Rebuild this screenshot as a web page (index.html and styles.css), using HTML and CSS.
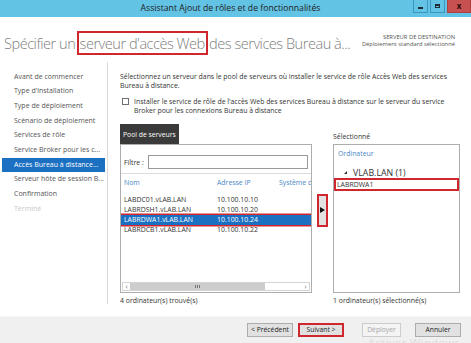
FILE: index.html
```html
<!DOCTYPE html>
<html lang="fr">
<head>
  <meta charset="UTF-8" />
  <title>Assistant Ajout de rôles et de fonctionnalités</title>
  <link rel="stylesheet" href="styles.css">
</head>
<body>
  <div class="window">
    <div class="titlebar">
      <span class="title">Assistant Ajout de rôles et de fonctionnalités</span>
      <div class="winbtns">
        <span class="wbtn min"><i></i></span>
        <span class="wbtn max"><i></i></span>
        <span class="wbtn close">x</span>
      </div>
    </div>

    <div class="header">
      <h1>Spécifier un <span class="mark">serveur d'accès Web</span> des services Bureau à...</h1>
      <div class="dest">
        <div>SERVEUR DE DESTINATION</div>
        <div>Déploiement standard sélectionné</div>
      </div>
    </div>

    <div class="main">
      <ul class="nav">
        <li>Avant de commencer</li>
        <li>Type d'installation</li>
        <li>Type de déploiement</li>
        <li>Scénario de déploiement</li>
        <li>Services de rôle</li>
        <li>Service Broker pour les c...</li>
        <li class="active">Accès Bureau à distance...</li>
        <li>Serveur hôte de session B...</li>
        <li>Confirmation</li>
        <li class="off">Terminé</li>
      </ul>

      <div class="content">
        <p class="intro">Sélectionnez un serveur dans le pool de serveurs où installer le service de rôle Accès Web des services<br>Bureau à distance.</p>
        <div class="check">
          <span class="box"></span>
          <span>Installer le service de rôle de l'accès Web des services Bureau à distance sur le serveur du service<br>Broker pour les connexions Bureau à distance</span>
        </div>

        <div class="pickers">
          <div class="pool">
            <div class="tab">Pool de serveurs</div>
            <div class="panel">
              <div class="filter">
                <span>Filtre :</span>
                <span class="input"></span>
              </div>
              <div class="list">
                <div class="row head">
                  <span class="c1">Nom</span><span class="c2">Adresse IP</span><span class="c3">Système d'exploitation</span>
                </div>
                <div class="rows">
                  <div class="row"><span class="c1">LABDC01.vLAB.LAN</span><span class="c2">10.100.10.10</span></div>
                  <div class="row"><span class="c1">LABRDSH1.vLAB.LAN</span><span class="c2">10.100.10.20</span></div>
                  <div class="row picked"><span class="c1">LABRDWA1.vLAB.LAN</span><span class="c2">10.100.10.24</span></div>
                  <div class="row"><span class="c1">LABRDCB1.vLAB.LAN</span><span class="c2">10.100.10.22</span></div>
                </div>
              </div>
              <div class="hscroll">
                <span class="arr">&lsaquo;</span>
                <span class="thumb"><i></i><i></i><i></i></span>
                <span class="track"></span>
                <span class="arr">&rsaquo;</span>
              </div>
            </div>
            <div class="count">4 ordinateur(s) trouvé(s)</div>
          </div>

          <div class="mid">
            <span class="add">
              <svg width="5" height="6" viewBox="0 0 5 6"><path d="M0 0 L5 3 L0 6 Z" fill="#111"/></svg>
            </span>
          </div>

          <div class="sel">
            <div class="label">Sélectionné</div>
            <div class="panel">
              <div class="sel-head">Ordinateur</div>
              <div class="tree"><span class="tri"></span>VLAB.LAN (1)</div>
              <div class="sel-item">LABRDWA1</div>
            </div>
            <div class="count">1 ordinateur(s) sélectionné(s)</div>
          </div>
        </div>
      </div>
    </div>

    <div class="footer">
      <span class="btn">&lt; Précédent</span>
      <span class="btn next">Suivant &gt;</span>
      <span class="btn off">Déployer</span>
      <span class="btn">Annuler</span>
    </div>

    <div class="watermark">Activer Windows</div>
  </div>
</body>
</html>
```

FILE: styles.css
```css
body {
  margin: 0;
  font-family: 'Open Sans', sans-serif;
  color: #333333;
  background-color: #ffffff;
}

.window {
  position: relative;
  width: 471px;
  height: 343px;
  overflow: hidden;
  display: flex;
  flex-direction: column;
}

/* title bar */
.titlebar {
  height: 17px;
  flex: none;
  background-color: #62c3e5;
  display: flex;
  align-items: flex-start;
}

.title {
  flex: 1;
  text-align: center;
  font-size: 8.7px;
  line-height: 17px;
  color: #222222;
  padding-left: 48px;
  white-space: nowrap;
}

.winbtns {
  display: flex;
  gap: 2px;
}

.wbtn {
  width: 15px;
  height: 13px;
  box-sizing: border-box;
  border: 1px solid #3e95bf;
  border-top: none;
  display: flex;
  align-items: center;
  justify-content: center;
}

.wbtn.min i {
  width: 5px;
  height: 2px;
  margin-top: 3px;
  background-color: #1f2a33;
}

.wbtn.max i {
  width: 5px;
  height: 4px;
  border: 1px solid #1f2a33;
  border-top-width: 2px;
  box-sizing: border-box;
}

.wbtn.close {
  width: 24px;
  background-color: #c75050;
  border-color: #b04040;
  color: #2a0c0c;
  font-size: 8px;
  font-weight: bold;
  line-height: 12px;
}

/* page header */
.header {
  height: 45px;
  flex: none;
  display: flex;
  justify-content: space-between;
  align-items: flex-start;
  padding: 16px 16px 0 4px;
  box-sizing: border-box;
}

h1 {
  margin: 0;
  font-size: 14.6px;
  line-height: 20px;
  font-weight: 300;
  color: #808080;
  letter-spacing: -0.5px;
  white-space: nowrap;
}

.mark {
  outline: 2px solid #d0262e;
  padding: 0 1px;
}

.dest {
  text-align: right;
  font-size: 5.8px;
  line-height: 6.5px;
  color: #555555;
  padding-top: 1px;
  white-space: nowrap;
}

/* main area */
.main {
  flex: 1;
  display: flex;
}

.nav {
  list-style: none;
  margin: 0 0 12px 0;
  padding: 7.5px 0 0 0;
  width: 107px;
  border-right: 1px solid #dadada;
}

.nav li {
  height: 14.7px;
  line-height: 14.7px;
  font-size: 7px;
  color: #555555;
  padding-left: 12px;
  margin: 0 2px;
  white-space: nowrap;
  overflow: hidden;
}

.nav li.active {
  background-color: #1c70c2;
  color: #ffffff;
}

.nav li.off {
  color: #c8c8c8;
}

.content {
  flex: 1;
  padding: 10px 10px 0 12px;
  font-size: 6.9px;
  color: #333333;
}

.intro {
  margin: 0;
  line-height: 9.4px;
  white-space: nowrap;
}

.check {
  display: flex;
  gap: 5px;
  margin-top: 6px;
  line-height: 9.4px;
  white-space: nowrap;
}

.check .box {
  width: 7px;
  height: 7px;
  border: 1px solid #6f6f6f;
  box-sizing: border-box;
  margin: 1px 0 0 2px;
  flex: none;
}

.pickers {
  display: flex;
  margin-top: 8px;
}

.pool {
  width: 192px;
}

.tab {
  display: inline-block;
  height: 20px;
  line-height: 22px;
  padding: 0 3px;
  background-color: #3a3a3a;
  color: #ffffff;
  font-size: 6.8px;
}

.panel {
  height: 149px;
  border: 1px solid #adadad;
  box-sizing: border-box;
  display: flex;
  flex-direction: column;
  overflow: hidden;
}

.filter {
  display: flex;
  align-items: flex-start;
  gap: 4px;
  padding: 10px 3px 0 3px;
  height: 29px;
  box-sizing: border-box;
  border-bottom: 1px solid #dcdcdc;
}

.filter span:first-child {
  line-height: 15px;
}

.filter .input {
  flex: 1;
  height: 14px;
  border: 1px solid #9a9a9a;
  box-sizing: border-box;
}

.list {
  flex: 1;
  padding-top: 4px;
}

.row {
  display: flex;
  height: 10px;
  line-height: 10px;
  padding-left: 3px;
  white-space: nowrap;
}

.row.head {
  color: #4a87c6;
  margin-bottom: 7px;
}

.c1 {
  width: 93px;
  flex: none;
}

.c2 {
  width: 62px;
  flex: none;
}

.rows .row {
  color: #333333;
}

.rows .row.picked {
  background-color: #1c70c2;
  color: #ffffff;
  box-shadow: 0 0 0 1.5px #d0262e;
  margin-left: -1px;
  padding-left: 4px;
}

.hscroll {
  height: 9px;
  margin: 0 1px 1px 1px;
  display: flex;
  border: 1px solid #d4d4d4;
  box-sizing: border-box;
}

.hscroll .arr {
  width: 7px;
  font-size: 7px;
  line-height: 7px;
  text-align: center;
  color: #666666;
}

.hscroll .thumb {
  width: 135px;
  background-color: #cdcdcd;
  display: flex;
  justify-content: center;
  align-items: center;
  gap: 1px;
}

.hscroll .thumb i {
  width: 1px;
  height: 3px;
  background-color: #777777;
}

.hscroll .track {
  flex: 1;
  background-color: #ffffff;
}

.count {
  margin-top: 3px;
  line-height: 10px;
}

.mid {
  width: 21px;
  display: flex;
  justify-content: center;
  align-items: flex-start;
  padding-top: 70px;
  box-sizing: border-box;
}

.add {
  width: 11px;
  height: 33px;
  box-sizing: border-box;
  background-color: #e2e2e2;
  border: 2px solid #d0262e;
  display: flex;
  align-items: center;
  justify-content: center;
}

.sel {
  width: 127px;
}

.sel .label {
  height: 20px;
  line-height: 25px;
}

.sel-head {
  color: #4a87c6;
  padding: 4px 4px 0 4px;
  line-height: 9px;
}

.tree {
  font-size: 8.8px;
  line-height: 10px;
  padding: 10px 0 0 10px;
  color: #333333;
  white-space: nowrap;
}

.tri {
  display: inline-block;
  width: 0;
  height: 0;
  border-left: 3px solid transparent;
  border-bottom: 3px solid #333333;
  margin-right: 6px;
  vertical-align: 2px;
}

.sel-item {
  height: 13px;
  line-height: 10px;
  border: 2px solid #d0262e;
  box-sizing: border-box;
  padding-left: 1px;
}

/* footer buttons */
.footer {
  height: 27px;
  flex: none;
  background-color: #f0f0f0;
  border-top: 1px solid #f6f6f6;
  box-sizing: border-box;
  display: flex;
  justify-content: flex-end;
  align-items: flex-start;
  padding: 6px 10px 0 0;
}

.btn {
  height: 14px;
  line-height: 12px;
  box-sizing: border-box;
  border: 1px solid #adadad;
  background-color: #e1e1e1;
  font-size: 6.8px;
  color: #222222;
  text-align: center;
  width: 46px;
  margin-left: 5px;
}

.btn.next {
  border: 2px solid #d0262e;
  line-height: 10px;
}

.btn.off {
  width: 39px;
  margin-left: 18px;
  color: #a8a8a8;
  border-color: #cccccc;
  background-color: #f4f4f4;
}

.btn.off + .btn {
  margin-left: 14px;
}

.watermark {
  position: absolute;
  left: 368px;
  top: 335px;
  font-size: 11px;
  color: #dcdcdc;
  letter-spacing: 0.5px;
}
```
